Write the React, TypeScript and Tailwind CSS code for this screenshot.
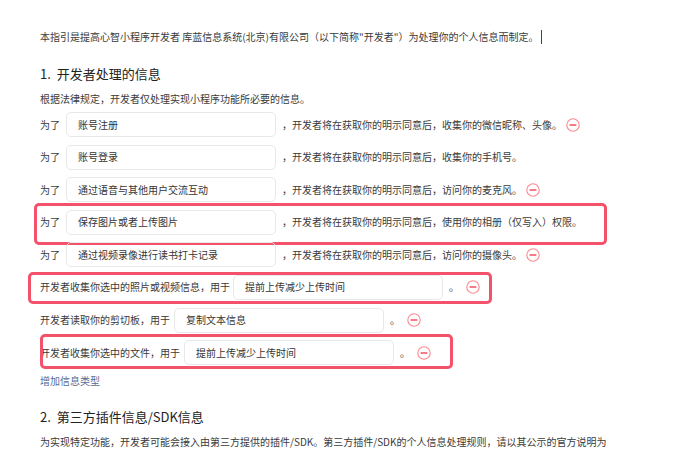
import React from 'react';

const MinusIcon = ({ className = '' }: { className?: string }) => (
  <svg width="14" height="14" viewBox="0 0 14 14" className={`shrink-0 ${className}`}>
    <circle cx="7" cy="7" r="6.2" fill="none" stroke="#fb8a8f" strokeWidth="1.1" />
    <line x1="4.2" y1="7" x2="9.8" y2="7" stroke="#f2505f" strokeWidth="1.6" strokeLinecap="round" />
  </svg>
);

const Field = ({ value, className = '' }: { value: string; className?: string }) => (
  <div className={`w-[210px] h-full shrink-0 border border-[#e8e8e8] rounded-[5px] px-[11px] flex items-center text-[#353535] ${className}`}>
    {value}
  </div>
);

const Mark = ({ className }: { className: string }) => (
  <div className={`absolute border-[3px] border-[#f4516a] rounded-[5px] pointer-events-none ${className}`} />
);

interface PurposeRow {
  purpose: string;
  rest: string;
  removable: boolean;
}

const purposeRows: PurposeRow[] = [
  { purpose: '账号注册', rest: '，开发者将在获取你的明示同意后，收集你的微信昵称、头像。', removable: true },
  { purpose: '账号登录', rest: '，开发者将在获取你的明示同意后，收集你的手机号。', removable: false },
  { purpose: '通过语音与其他用户交流互动', rest: '，开发者将在获取你的明示同意后，访问你的麦克风。', removable: true },
  { purpose: '保存图片或者上传图片', rest: '，开发者将在获取你的明示同意后，使用你的相册（仅写入）权限。', removable: false },
  { purpose: '通过视频录像进行读书打卡记录', rest: '，开发者将在获取你的明示同意后，访问你的摄像头。', removable: true },
];

export default function App() {
  return (
    <div className="w-[682px] h-[451px] overflow-hidden bg-white font-['Noto_Sans_CJK_SC','Noto_Sans',sans-serif] text-[10px] leading-[14px] text-[#3a3a3a]">
      <div className="pl-10 pt-[30px] flex flex-col">
        <p className="flex items-center">
          <span>本指引是提高心智小程序开发者 库蓝信息系统(北京)有限公司（以下简称"开发者"）为处理你的个人信息而制定。</span>
          <span className="inline-block w-px h-[14px] bg-[#444] ml-[3px]" />
        </p>

        <h2 className="mt-[21px] text-[13px] leading-[18px] text-[#222]">1.&nbsp;&nbsp;开发者处理的信息</h2>
        <p className="mt-[9px]">根据法律规定，开发者仅处理实现小程序功能所必要的信息。</p>

        <div className="mt-[6px] flex flex-col gap-[7.6px]">
          {purposeRows.map((row, i) => (
            <div key={i} className="relative flex items-center h-[25px]">
              <span className="w-[26px] shrink-0">为了</span>
              <Field value={row.purpose} />
              <span className="ml-[6px] whitespace-nowrap">{row.rest}</span>
              {row.removable && <MinusIcon className="ml-[4px]" />}
              {i === 3 && <Mark className="-left-[6px] -top-[7px] w-[573px] h-[42px]" />}
            </div>
          ))}

          <div className="relative flex items-center h-[25px]">
            <span className="shrink-0">开发者收集你选中的照片或视频信息，用于</span>
            <Field value="提前上传减少上传时间" className="ml-[3px]" />
            <span className="ml-[6px]">。</span>
            <MinusIcon className="ml-[7px]" />
            <Mark className="-left-[12px] -top-[3px] w-[464px] h-[32px]" />
          </div>

          <div className="relative flex items-center h-[25px]">
            <span className="shrink-0">开发者读取你的剪切板，用于</span>
            <Field value="复制文本信息" className="ml-[4px]" />
            <span className="ml-[6px]">。</span>
            <MinusIcon className="ml-[7px]" />
          </div>

          <div className="relative flex items-center h-[25px]">
            <span className="shrink-0">开发者收集你选中的文件，用于</span>
            <Field value="提前上传减少上传时间" className="ml-[4px]" />
            <span className="ml-[6px]">。</span>
            <MinusIcon className="ml-[7px]" />
            <Mark className="left-0 -top-[6px] w-[413px] h-[35px]" />
          </div>
        </div>

        <a className="mt-[9px] text-[#576b95] cursor-pointer">增加信息类型</a>

        <h2 className="mt-[20px] text-[13px] leading-[18px] text-[#222]">2.&nbsp;&nbsp;第三方插件信息/SDK信息</h2>
        <p className="mt-[9px]">为实现特定功能，开发者可能会接入由第三方提供的插件/SDK。第三方插件/SDK的个人信息处理规则，请以其公示的官方说明为</p>
      </div>
    </div>
  );
}
